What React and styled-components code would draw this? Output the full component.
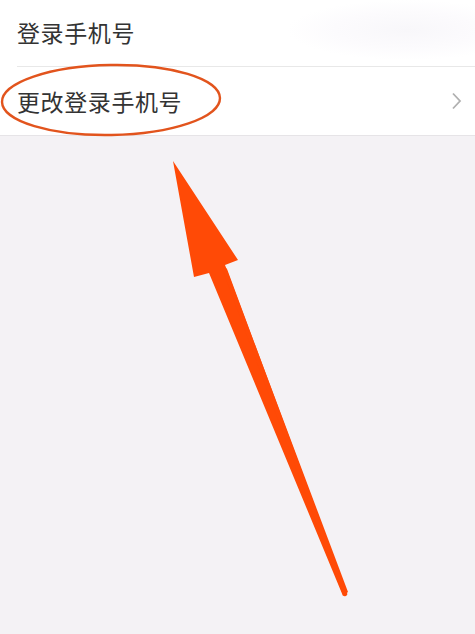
import React from "react";
import styled, { createGlobalStyle } from "styled-components";

const Global = createGlobalStyle`
  html, body {
    margin: 0;
    padding: 0;
    background: #f4f2f5;
  }
  body {
    font-family: "Noto Sans CJK SC", "Noto Sans", sans-serif;
  }
`;

const Page = styled.div`
  position: relative;
  width: 475px;
  height: 634px;
  overflow: hidden;
  background: #f4f2f5;
`;

const List = styled.div`
  background: #fff;
  border-bottom: 1px solid #e6e4e7;
`;

const Row = styled.div`
  display: flex;
  align-items: center;
  justify-content: space-between;
  height: ${(p) => p.h}px;
  margin-left: 17px;
  padding-right: 13px;
  border-bottom: ${(p) => (p.last ? "none" : "1px solid #e8e8e8")};
  background: ${(p) =>
    p.blur
      ? "radial-gradient(ellipse 120px 30px at 390px 30px, #f8f7fa 0%, #fcfbfd 60%, #fff 100%)"
      : "#fff"};
`;

const Label = styled.span`
  font-size: 23px;
  color: #333;
  letter-spacing: 0.6px;
  margin-top: ${(p) => p.shift || 0}px;
`;

const Chevron = styled.svg`
  width: 11px;
  height: 18px;
`;

const Overlay = styled.svg`
  position: absolute;
  left: 0;
  top: 0;
  pointer-events: none;
`;

export default function App() {
  return (
    <Page>
      <Global />
      <List>
        <Row h={66} blur>
          <Label shift={-3}>登录手机号</Label>
        </Row>
        <Row h={68} last>
          <Label shift={-1}>更改登录手机号</Label>
          <Chevron viewBox="0 0 11 18">
            <path d="M2 1.5 L9 9 L2 16.5" fill="none" stroke="#b0b0b0" strokeWidth="1.8" />
          </Chevron>
        </Row>
      </List>
      <Overlay width="475" height="634" viewBox="0 0 475 634">
        <ellipse
          cx="111"
          cy="100"
          rx="109"
          ry="35"
          fill="none"
          stroke="#e2541d"
          strokeWidth="2.4"
          transform="rotate(-1 111 100)"
        />
        <polygon points="173,161 238,260 225,265 348,592 343,596 209,273 194,277" fill="#ff4a06" />
        <line x1="345" y1="594" x2="225" y2="270" stroke="#ff4a06" strokeWidth="4.5" strokeLinecap="round" />
      </Overlay>
    </Page>
  );
}
